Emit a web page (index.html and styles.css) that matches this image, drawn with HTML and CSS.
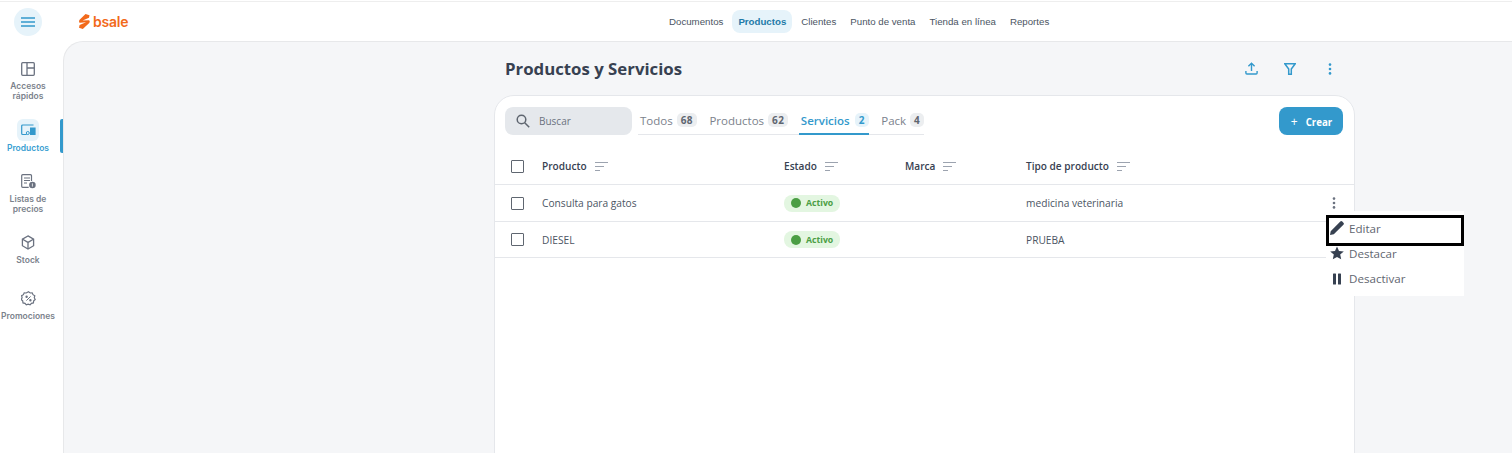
FILE: index.html
```html
<!DOCTYPE html>
<html lang="es">
<head>
<meta charset="utf-8">
<title>Productos y Servicios</title>
<link rel="stylesheet" href="styles.css">
</head>
<body>
<header class="topbar">
  <button class="menu-btn" aria-label="Menú">
    <svg width="14" height="10" viewBox="0 0 14 10"><path d="M0 1h14M0 5h14M0 9h14" stroke="#3399cc" stroke-width="1.4" fill="none"/></svg>
  </button>
  <div class="logo">
    <svg width="11" height="15" viewBox="0 0 11 15"><path d="M6.500 0L10.500 1.200 10 3.800 3.600 6.600 9.500 6.200C11 6.200 11 8 10.200 9L3.800 15 0 13.700 .6 11 7 8.300 1.200 8.800C-.2 8.800-.2 7 .6 5.800Z" fill="#f26a1b"/></svg>
    <span class="logo-text">bsale</span>
  </div>
  <nav class="topnav">
    <a>Documentos</a>
    <a class="on">Productos</a>
    <a>Clientes</a>
    <a>Punto de venta</a>
    <a>Tienda en línea</a>
    <a>Reportes</a>
  </nav>
</header>
<div class="shell">
  <aside class="side">
    <a class="side-item h-a">
      <span class="side-icon"><svg width="14" height="14" viewBox="0 0 14 14" fill="none" stroke="#6b7280" stroke-width="1.3"><rect x=".7" y=".7" width="12.6" height="12.6" rx="1"/><path d="M6 .7v12.6M6 6h7.3"/></svg></span>
      <span>Accesos<br>rápidos</span>
    </a>
    <a class="side-item h-b on">
      <span class="side-icon"><svg width="15" height="12" viewBox="0 0 15 12" fill="none"><path d="M12.5 1H1.700a1 1 0 0 0-1 1v7.500a1 1 0 0 0 1 1h4" stroke="#3399cc" stroke-width="1.200"/><rect x="9" y="3.500" width="5.600" height="7.500" fill="#3399cc"/><circle cx="6.800" cy="9" r="1.500" stroke="#3399cc" stroke-width="1"/></svg></span>
      <span>Productos</span>
    </a>
    <a class="side-item h-c">
      <span class="side-icon"><svg width="15" height="15" viewBox="0 0 15 15" fill="none"><path d="M10.500 7V1.700a1 1 0 0 0-1-1H1.700a1 1 0 0 0-1 1v10.600a1 1 0 0 0 1 1h6" stroke="#6b7280" stroke-width="1.200"/><path d="M3 4h6M3 6.500h6M3 9h3" stroke="#6b7280" stroke-width="1.100"/><circle cx="11.400" cy="11" r="3.300" fill="#6b7280"/><path d="M11.400 9.400v3.200" stroke="#fff" stroke-width=".8"/></svg></span>
      <span>Listas de<br>precios</span>
    </a>
    <a class="side-item h-d">
      <span class="side-icon"><svg width="14" height="15" viewBox="0 0 14 15" fill="none" stroke="#6b7280" stroke-width="1.300"><path d="M7 .9l5.600 3.200v6.600L7 14 1.400 10.700V4.100z"/><path d="M1.600 4.200L7 7.400l5.400-3.200M7 7.400V14"/></svg></span>
      <span>Stock</span>
    </a>
    <a class="side-item h-e">
      <span class="side-icon"><svg width="15" height="15" viewBox="0 0 15 15" fill="none" stroke="#6b7280" stroke-width="1.200"><path d="M7.500.8l1.700 1.200 2-.2.8 1.900 1.800 1-.5 2 .9 1.800-1.500 1.400-.3 2-2 .4-1.300 1.600-1.900-.7-1.900.7L4 12.300l-2-.4-.3-2L.2 8.500l.9-1.800-.5-2 1.800-1 .8-1.900 2 .2z"/><path d="M5.400 9.600l4.200-4.200" stroke-width="1"/><circle cx="5.600" cy="5.800" r=".6" fill="#6b7280"/><circle cx="9.400" cy="9.200" r=".6" fill="#6b7280"/></svg></span>
      <span>Promociones</span>
    </a>
    <span class="side-mark"></span>
  </aside>
  <main class="main">
    <div class="column">
      <div class="title-row">
        <h1>Productos y Servicios</h1>
        <div class="actions">
          <svg class="act-up" width="13" height="13" viewBox="0 0 13 13" fill="none" stroke="#3399cc" stroke-width="1.400"><path d="M6.500 9V1.500M3.400 4.300l3.100-3 3.100 3M.9 9v2a1 1 0 0 0 1 1h9.200a1 1 0 0 0 1-1V9"/></svg>
          <svg class="act-filter" width="12" height="12" viewBox="0 0 12 12" fill="none" stroke="#3399cc" stroke-width="1.500"><path d="M.8.8h10.400L7.300 6v5.200H4.700V6z"/></svg>
          <svg width="4" height="12" viewBox="0 0 4 12" fill="#3399cc"><circle cx="2" cy="1.600" r="1.300"/><circle cx="2" cy="6" r="1.300"/><circle cx="2" cy="10.400" r="1.300"/></svg>
        </div>
      </div>
      <section class="card">
        <div class="toolbar">
          <label class="search">
            <svg width="14" height="14" viewBox="0 0 14 14" fill="none" stroke="#5f6670" stroke-width="1.500"><circle cx="5.500" cy="5.500" r="4.300"/><path d="M8.700 8.700l4.500 4.500"/></svg>
            <span>Buscar</span>
          </label>
          <div class="tabs">
            <a class="tab">Todos <b>68</b></a>
            <a class="tab">Productos <b>62</b></a>
            <a class="tab on">Servicios <b>2</b></a>
            <a class="tab">Pack <b>4</b></a>
          </div>
          <button class="create"><span class="plus">+</span>Crear</button>
        </div>
        <div class="row head">
          <span class="check"></span>
          <span class="c1">Producto <svg class="sort" width="13" height="9" viewBox="0 0 13 9" stroke="#9ca3af" fill="none"><path d="M0 .5h13M0 4.500h9M0 8.500h5"/></svg></span>
          <span class="c2">Estado <svg class="sort" width="13" height="9" viewBox="0 0 13 9" stroke="#9ca3af" fill="none"><path d="M0 .5h13M0 4.500h9M0 8.500h5"/></svg></span>
          <span class="c3">Marca <svg class="sort" width="13" height="9" viewBox="0 0 13 9" stroke="#9ca3af" fill="none"><path d="M0 .5h13M0 4.500h9M0 8.500h5"/></svg></span>
          <span class="c4">Tipo de producto <svg class="sort" width="13" height="9" viewBox="0 0 13 9" stroke="#9ca3af" fill="none"><path d="M0 .5h13M0 4.500h9M0 8.500h5"/></svg></span>
        </div>
        <div class="row">
          <span class="check"></span>
          <span class="c1">Consulta para gatos</span>
          <span class="c2"><span class="pill"><i></i>Activo</span></span>
          <span class="c3"></span>
          <span class="c4">medicina veterinaria</span>
          <svg class="kebab" width="4" height="12" viewBox="0 0 4 12" fill="#6b7280"><circle cx="2" cy="1.600" r="1.300"/><circle cx="2" cy="6" r="1.300"/><circle cx="2" cy="10.400" r="1.300"/></svg>
        </div>
        <div class="row">
          <span class="check"></span>
          <span class="c1">DIESEL</span>
          <span class="c2"><span class="pill"><i></i>Activo</span></span>
          <span class="c3"></span>
          <span class="c4">PRUEBA</span>
        </div>
      </section>
    </div>
  </main>
</div>
<div class="popup">
  <a class="pop-item focus"><svg width="14" height="14" viewBox="0 0 14 14" fill="#374151"><path d="M0 14l.7-3.800L10.300.6a1.400 1.400 0 0 1 2 0l1.100 1.100a1.400 1.400 0 0 1 0 2L3.800 13.300z"/></svg>Editar</a>
  <a class="pop-item"><svg width="14" height="14" viewBox="0 0 14 14" fill="#374151"><path d="M7 .5l2 4.400 4.800.5-3.600 3.200 1 4.700L7 10.900l-4.200 2.400 1-4.700L.2 5.400 5 4.900z"/></svg>Destacar</a>
  <a class="pop-item"><svg width="14" height="14" viewBox="0 0 14 14" fill="#374151"><rect x="3" y="2.500" width="3" height="11" rx=".5"/><rect x="8" y="2.500" width="3" height="11" rx=".5"/></svg>Desactivar</a>
</div>
</body>
</html>
```
FILE: styles.css
```css
* { box-sizing: border-box; }
html, body { margin: 0; height: 453px; overflow: hidden; }
body { background: #fff; font-family: "Open Sans", sans-serif; color: #374151; position: relative; }
a { text-decoration: none; color: inherit; }

.topbar { height: 40px; margin-top: 1px; border-top: 1px solid #eeeeee; position: relative; display: flex; align-items: center; }
.menu-btn { width: 28px; height: 28px; margin: 1px 0 0 14px; border: 0; padding: 0; border-radius: 50%; background: #e6f3fa; display: flex; align-items: center; justify-content: center; }
.logo { margin: 0 0 0 37px; display: flex; align-items: center; gap: 3px; }
.logo-text { font-family: "Inter", sans-serif; font-weight: 600; font-size: 14px; color: #f26a1b; line-height: 16px; letter-spacing: -.2px; }
.topnav { position: absolute; left: 662px; top: 8px; height: 23px; display: flex; align-items: center; font-family: "Liberation Sans", sans-serif; font-size: 9.700px; color: #4b5563; }
.topnav a { padding: 0 7px; height: 23px; line-height: 23px; border-radius: 8px; }
.topnav a.on { background: #e6f3fa; color: #1f7aa8; font-weight: 700; padding: 0 6px; margin: 0 2px 0 2px; }

.shell { display: flex; height: 412px; }
.side { width: 63px; flex: none; position: relative; font-family: "Inter", sans-serif; font-size: 8.500px; line-height: 10px; font-weight: 600; color: #7b828c; text-align: center; }
.side-item { display: flex; flex-direction: column; align-items: center; position: absolute; left: 0; width: 56px; }
.side-icon { width: 22px; height: 22px; border-radius: 6px; display: flex; align-items: center; justify-content: center; margin-bottom: 2px; }
.h-a { top: 17px; }
.h-a .side-icon { margin-bottom: 1px; }
.h-b { top: 78px; }
.h-c { top: 129px; }
.h-d { top: 190px; }
.h-e { top: 246px; }
.side-item.on { color: #3b9fd2; }
.side-item.on .side-icon { background: #e6f3fa; }
.side-mark { position: absolute; right: 0; top: 78px; width: 3px; height: 34px; border-radius: 2px 0 0 2px; background: #3399cc; }

.main { flex: 1; background: #f5f6f8; border-top: 1px solid #e7e8ea; border-left: 1px solid #e7e8ea; border-top-left-radius: 20px; padding-left: 430px; overflow: hidden; }
.column { width: 861px; }
.title-row { height: 53px; display: flex; align-items: center; padding: 0 23px 0 11px; justify-content: space-between; }
.title-row h1 { margin: 0; font-size: 16.800px; font-weight: 700; color: #374151; }
.actions { display: flex; align-items: center; }
.act-up { margin-right: 26px; }
.act-filter { margin-right: 32px; }
.card { background: #fff; border: 1px solid #e5e7eb; border-radius: 20px 20px 0 0; height: 400px; }
.toolbar { display: flex; align-items: flex-start; padding: 11px 11px 0 10px; height: 50px; }
.search { width: 127px; height: 28px; border-radius: 8px; background: #e5e8ec; display: flex; align-items: center; padding-left: 11px; gap: 9px; font-size: 10px; color: #6b7280; }
.tabs { display: flex; margin-left: 6px; height: 28px; border-bottom: 1px solid #e5e7eb; }
.tab { display: flex; align-items: center; gap: 4px; padding: 0 0 0 2px; margin-right: 10.500px; font-size: 11.500px; color: #7b828c; height: 28px; border-bottom: 2px solid transparent; }
.tab:last-child { margin-right: 0; }
.tab b { font-size: 10px; font-weight: 700; background: #eceef0; color: #5f6670; border-radius: 5px; padding: 0 4px; height: 14px; line-height: 14px; min-width: 13px; text-align: center; letter-spacing: .4px; }
.tab.on { color: #3399cc; font-weight: 600; border-bottom-color: #3399cc; gap: 5px; }
.tab.on b { background: #e6f3fa; color: #3399cc; }
.create { margin-left: auto; width: 64px; height: 28px; border: 0; border-radius: 8px; background: #3399cc; color: #fff; font: 700 9.700px "Open Sans", sans-serif; padding: 0 0 0 1px; }
.plus { font-weight: 400; font-size: 12px; margin-right: 8px; }

.row { height: 36.500px; display: flex; align-items: center; border-bottom: 1px solid #e5e7eb; font-size: 10.200px; color: #4b5563; position: relative; padding: 1px 0 0 16px; }
.row.head { height: 39px; font-weight: 600; color: #374151; font-size: 10.100px; padding-top: 2px; }
.check { width: 13px; height: 13px; border: 1.500px solid #5f6670; border-radius: 1px; flex: none; margin-right: 18px; }
.c1 { width: 242px; display: flex; align-items: center; }
.c2 { width: 121px; display: flex; align-items: center; }
.c3 { width: 121px; display: flex; align-items: center; }
.c4 { display: flex; align-items: center; }
.sort { margin-left: 8px; }
.pill { display: inline-flex; align-items: center; height: 17px; width: 56px; background: #e3f6e1; border-radius: 8px; font-size: 8.700px; font-weight: 700; color: #4b9e44; padding-left: 7px; }
.pill i { width: 10px; height: 10px; border-radius: 50%; background: #4b9e44; margin-right: 5px; }
.kebab { position: absolute; right: 18px; top: 12px; }

.popup { position: absolute; left: 1326px; top: 211px; width: 138px; height: 85px; background: #fff; padding-top: 4px; font-size: 11.600px; color: #5f6670; }
.pop-item { display: flex; align-items: center; height: 25px; padding-left: 4px; gap: 5px; }
.pop-item.focus { height: 31px; border: 3px solid #000; padding: 0 0 5px 1px; margin-bottom: -5.500px; }
.pop-item svg { flex: none; }
```
